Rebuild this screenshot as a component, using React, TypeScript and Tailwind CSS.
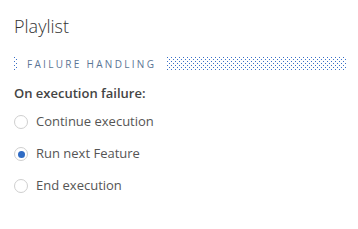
const dots =
  "bg-[conic-gradient(from_270deg_at_1px_1px,#3a70c6_25%,transparent_0),conic-gradient(from_270deg_at_1px_1px,#3a70c6_25%,transparent_0)] bg-[length:4px_4px] bg-[position:0_0,2px_2px]";

const options = [
  { label: "Continue execution", checked: false },
  { label: "Run next Feature", checked: true },
  { label: "End execution", checked: false },
];

function Radio({ checked }: { checked: boolean }) {
  return (
    <span className="flex h-[14px] w-[14px] items-center justify-center rounded-full border border-[#cfcfcf] bg-white">
      {checked && <span className="h-[7px] w-[7px] rounded-full bg-[#2f6bc4]" />}
    </span>
  );
}

export default function App() {
  return (
    <div className="h-[229px] w-[358px] bg-white pl-[14px] pr-[11px] pt-[14px] font-['Open_Sans',sans-serif] text-[#444]">
      <h1 className="text-[18px] font-light leading-[24px] text-[#333]">Playlist</h1>
      <div className="mt-[19px] flex h-[14px] items-center">
        <div className={`h-[14px] w-[4px] ${dots}`} />
        <span className="ml-[9px] mr-[11px] text-[10px] leading-[14px] tracking-[0.23em] text-[#5b7595]">
          FAILURE HANDLING
        </span>
        <div className={`h-[14px] flex-1 ${dots}`} />
      </div>
      <div className="mt-[13px] text-[13px] font-semibold leading-[18px] text-[#444]">
        On execution failure:
      </div>
      <div className="mt-[11px] flex flex-col gap-[14px]">
        {options.map((o) => (
          <label key={o.label} className="flex h-[18px] items-center gap-[8px] text-[13px] text-[#555]">
            <Radio checked={o.checked} />
            {o.label}
          </label>
        ))}
      </div>
    </div>
  );
}
